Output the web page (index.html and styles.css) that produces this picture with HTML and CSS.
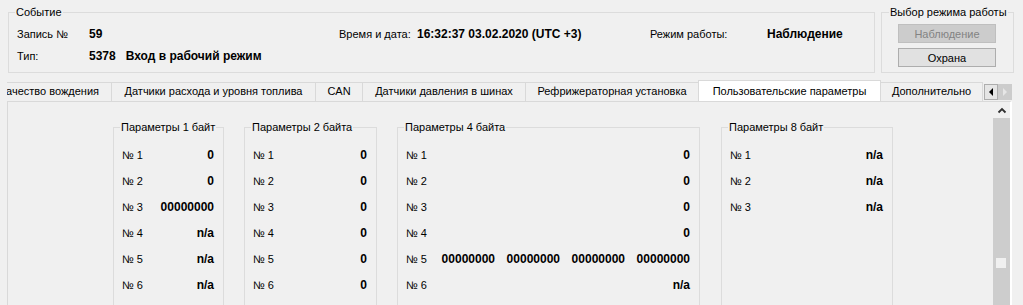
FILE: index.html
```html
<!DOCTYPE html>
<html lang="ru">
<head>
    <meta charset="UTF-8">
    <title>Пользовательские параметры</title>
    <link rel="stylesheet" href="styles.css">
</head>
<body>

<div class="top">
    <div class="group event">
        <div class="group-title">Событие</div>
        <div class="event-grid">
            <span>Запись №</span>
            <b>59</b>
            <span>Время и дата:</span>
            <b>16:32:37 03.02.2020 (UTC +3)</b>
            <span>Режим работы:</span>
            <b>Наблюдение</b>
            <span>Тип:</span>
            <b class="wide"><span class="code">5378</span>Вход в рабочий режим</b>
        </div>
    </div>
    <div class="group mode">
        <div class="group-title">Выбор режима работы</div>
        <button class="mode-button" disabled>Наблюдение</button>
        <button class="mode-button">Охрана</button>
    </div>
</div>

<div class="tabbar">
    <div class="tabs">
        <div class="tab first">Качество вождения</div>
        <div class="tab" style="width: 204px">Датчики расхода и уровня топлива</div>
        <div class="tab" style="width: 47px">CAN</div>
        <div class="tab" style="width: 163px">Датчики давления в шинах</div>
        <div class="tab" style="width: 173px">Рефрижераторная установка</div>
        <div class="tab active" style="width: 183px">Пользовательские параметры</div>
        <div class="tab" style="width: 102px">Дополнительно</div>
    </div>
    <div class="tab-scroll">
        <span class="arrow-btn"><svg width="12" height="14" viewBox="0 0 12 14"><polygon points="8,3 8,11 4,7" fill="#000"/></svg></span>
        <span class="arrow-btn off"><svg width="12" height="14" viewBox="0 0 12 14"><polygon points="4,3 4,11 8,7" fill="#e6e6e6"/></svg></span>
    </div>
</div>

<div class="panel">
    <div class="params">
        <div class="group pgroup" style="width: 111px">
            <div class="group-title">Параметры 1 байт</div>
            <div class="row"><span>№ 1</span><b>0</b></div>
            <div class="row"><span>№ 2</span><b>0</b></div>
            <div class="row"><span>№ 3</span><b>00000000</b></div>
            <div class="row"><span>№ 4</span><b>n/a</b></div>
            <div class="row"><span>№ 5</span><b>n/a</b></div>
            <div class="row"><span>№ 6</span><b>n/a</b></div>
        </div>
        <div class="group pgroup" style="width: 133px">
            <div class="group-title">Параметры 2 байта</div>
            <div class="row"><span>№ 1</span><b>0</b></div>
            <div class="row"><span>№ 2</span><b>0</b></div>
            <div class="row"><span>№ 3</span><b>0</b></div>
            <div class="row"><span>№ 4</span><b>0</b></div>
            <div class="row"><span>№ 5</span><b>0</b></div>
            <div class="row"><span>№ 6</span><b>0</b></div>
        </div>
        <div class="group pgroup" style="width: 303px">
            <div class="group-title">Параметры 4 байта</div>
            <div class="row"><span>№ 1</span><b>0</b></div>
            <div class="row"><span>№ 2</span><b>0</b></div>
            <div class="row"><span>№ 3</span><b>0</b></div>
            <div class="row"><span>№ 4</span><b>0</b></div>
            <div class="row"><span>№ 5</span>
                <div class="bytes"><b>00000000</b><b>00000000</b><b>00000000</b><b>00000000</b></div>
            </div>
            <div class="row"><span>№ 6</span><b>n/a</b></div>
        </div>
        <div class="group pgroup" style="width: 172px">
            <div class="group-title">Параметры 8 байт</div>
            <div class="row"><span>№ 1</span><b>n/a</b></div>
            <div class="row"><span>№ 2</span><b>n/a</b></div>
            <div class="row"><span>№ 3</span><b>n/a</b></div>
        </div>
    </div>
    <div class="vscroll">
        <div class="vscroll-up">
            <svg class="chevron" width="10" height="7" viewBox="0 0 10 7"><polyline points="1.5,5.5 5,2 8.5,5.5" fill="none" stroke="#303030" stroke-width="1.8"/></svg>
        </div>
        <div class="vscroll-track">
            <div class="vscroll-mark"></div>
        </div>
    </div>
</div>

</body>
</html>
```

FILE: styles.css
```css
body {
    margin: 0;
    padding: 0;
    height: 305px;
    overflow: hidden;
    background-color: #f0f0f0;
    font-family: "Liberation Sans", Arial, sans-serif;
    font-size: 11px;
    color: #000;
}
b {
    font-weight: bold;
    font-size: 12px;
}
.top {
    display: flex;
    gap: 6px;
    padding: 12px 0 0 8px;
}
.group {
    position: relative;
    box-sizing: border-box;
    border: 1px solid #dcdcdc;
}
.group-title {
    position: absolute;
    top: -7px;
    left: 6px;
    padding: 0 1px;
    line-height: 13px;
    background-color: #f0f0f0;
    white-space: nowrap;
}
.event {
    width: 867px;
    height: 61px;
    padding: 10px 0 0 8px;
}
.event-grid {
    display: grid;
    grid-template-columns: 72px 250px 78px 233px 117px auto;
    grid-auto-rows: 22px;
    align-items: center;
    white-space: nowrap;
}
.event-grid .wide {
    grid-column: span 5;
}
.code {
    margin-right: 10px;
}
.mode {
    width: 133px;
    height: 61px;
    padding: 11px 0 0 16px;
    display: flex;
    flex-direction: column;
    gap: 5px;
}
.mode .group-title {
    left: 7px;
}
.mode-button {
    width: 98px;
    height: 19px;
    padding: 0;
    font-family: inherit;
    font-size: 11px;
    color: #000;
    background-color: #e1e1e1;
    border: 1px solid #adadad;
}
.mode-button:disabled {
    color: #838383;
    background-color: #cccccc;
    border-color: #bfbfbf;
}
.tabbar {
    display: flex;
    margin: 7px 0 0 7px;
    height: 21px;
}
.tabs {
    display: flex;
    align-items: flex-end;
    width: 977px;
    overflow: hidden;
}
.tab {
    flex: none;
    box-sizing: border-box;
    height: 19px;
    line-height: 17px;
    border-top: 1px solid #d9d9d9;
    border-right: 1px solid #d9d9d9;
    text-align: center;
    white-space: nowrap;
}
.tab.first {
    width: 105px;
    display: flex;
    justify-content: flex-end;
    padding-right: 12px;
}
.tab.active {
    height: 22px;
    line-height: 20px;
    margin-bottom: -1px;
    margin-left: -1px;
    background-color: #fff;
    border-left: 1px solid #d9d9d9;
    position: relative;
    z-index: 1;
}
.tab-scroll {
    display: flex;
    margin-top: 4px;
}
.arrow-btn {
    box-sizing: border-box;
    width: 14px;
    height: 16px;
    display: flex;
    align-items: center;
    justify-content: center;
    background-color: #e5e5e5;
    border: 1px solid #adadad;
}
.arrow-btn.off {
    background-color: #cccccc;
    border-color: #cccccc;
}
.panel {
    display: flex;
    box-sizing: border-box;
    width: 1005px;
    height: 210px;
    margin-left: 7px;
    border-top: 1px solid #d9d9d9;
    border-left: 1px solid #d9d9d9;
    border-right: 2px solid #fff;
}
.params {
    flex: 1;
    display: flex;
    align-items: flex-start;
    gap: 20px;
    padding: 25px 0 0 105px;
}
.pgroup {
    height: 200px;
    padding: 14px 9px 0 8px;
}
.pgroup:last-child {
    margin-left: 1px;
}
.row {
    display: flex;
    justify-content: space-between;
    align-items: center;
    height: 26px;
    white-space: nowrap;
}
.bytes {
    display: flex;
    gap: 10px;
}
.bytes b {
    width: 55px;
    text-align: right;
}
.vscroll {
    flex: none;
    width: 17px;
    display: flex;
    flex-direction: column;
}
.vscroll-up {
    flex: none;
    height: 16px;
    display: flex;
    align-items: center;
    justify-content: center;
}
.chevron {
    display: block;
}
.vscroll-track {
    flex: 1;
    background-color: #cdcdcd;
    padding: 140px 0 0 3px;
}
.vscroll-mark {
    width: 10px;
    height: 10px;
    background-color: #f0f0f0;
}
```
